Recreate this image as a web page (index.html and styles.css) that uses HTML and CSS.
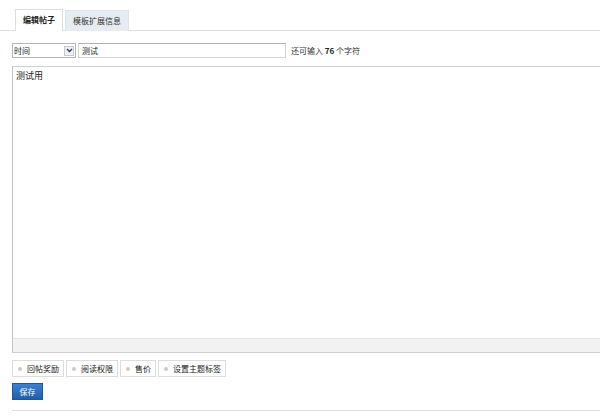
FILE: index.html
```html
<!DOCTYPE html>
<html>
<head>
  <meta charset="utf-8">
  <title>编辑帖子</title>
  <link rel="stylesheet" href="styles.css">
</head>
<body>
  <div class="tabs">
    <div class="tab active">编辑帖子</div>
    <div class="tab">模板扩展信息</div>
  </div>
  <div class="wrap">
    <div class="subject">
      <div class="select">
        <span>时间</span>
        <span class="arrow">
          <svg width="7" height="5" viewBox="0 0 7 5"><path d="M1 1l2.5 2.5L6 1" fill="none" stroke="#2b3f66" stroke-width="1.4"/></svg>
        </span>
      </div>
      <div class="input">测试</div>
      <div class="hint">还可输入 <b>76</b> 个字符</div>
    </div>
    <div class="editor">
      <div class="content">测试用</div>
      <div class="statusbar"></div>
    </div>
    <div class="extras">
      <div class="extra"><i></i>回帖奖励</div>
      <div class="extra"><i></i>阅读权限</div>
      <div class="extra"><i></i>售价</div>
      <div class="extra"><i></i>设置主题标签</div>
    </div>
    <div class="actions">
      <div class="btn-save">保存</div>
    </div>
  </div>
</body>
</html>
```

FILE: styles.css
```css
html,
body {
  margin: 0;
  padding: 0;
  background: #fff;
  overflow: hidden;
}
body {
  font-family: "Noto Sans CJK SC", "Liberation Sans", sans-serif;
  font-size: 8px;
  color: #222;
  line-height: 1;
}

.tabs {
  display: flex;
  gap: 2px;
  padding: 10px 0 0 15px;
  border-bottom: 1px solid #ddd;
}
.tab {
  height: 20px;
  line-height: 20px;
  padding: 0 7px;
  background: #e6ecf1;
  border: 1px solid #dbe2e8;
  border-bottom: 0;
  margin-bottom: -1px;
  color: #333;
}
.tab.active {
  background: #fff;
  font-weight: bold;
  color: #222;
  border-color: #ddd;
  height: 21px;
  margin-top: -1px;
}

.wrap {
  padding: 12px 0 0 12px;
}
.subject {
  display: flex;
  align-items: center;
  gap: 2px;
  height: 15px;
}
.select {
  width: 61px;
  height: 13px;
  border: 1px solid #b5b5b5;
  display: flex;
  align-items: center;
  justify-content: space-between;
  padding-left: 1px;
}
.select .arrow {
  width: 10px;
  height: 10px;
  margin-right: 1px;
  background: #eef0f3;
  border: 1px solid #c4c8cf;
  display: flex;
  align-items: center;
  justify-content: center;
  box-sizing: border-box;
}
.input {
  width: 203px;
  height: 13px;
  border: 1px solid #d4d4d4;
  border-top-color: #b0b0b0;
  padding-left: 3px;
  line-height: 13px;
}
.hint {
  margin-left: 3px;
  color: #333;
}
.hint b {
  color: #222;
}

.editor {
  margin-top: 8px;
  height: 285px;
  border: 1px solid #d0d0d0;
  border-right: 0;
  border-left-color: #c4c4c4;
  display: flex;
  flex-direction: column;
}
.editor .content {
  flex: 1;
  padding: 4px 3px;
  font-size: 9px;
}
.editor .statusbar {
  height: 13px;
  background: #f2f2f2;
  border-top: 1px solid #e4e4e4;
}

.extras {
  display: flex;
  gap: 2px;
  margin-top: 7px;
}
.extra {
  height: 15px;
  line-height: 15px;
  border: 1px solid #ddd;
  padding: 0 4px 0 5px;
  display: flex;
  align-items: center;
  gap: 5px;
}
.extra i {
  width: 4px;
  height: 4px;
  border-radius: 50%;
  background: #ccc;
}

.actions {
  padding: 6px 0 10px;
  border-bottom: 1px solid #ddd;
}
.btn-save {
  display: inline-block;
  width: 31px;
  height: 17px;
  line-height: 16px;
  text-align: center;
  color: #fff;
  background: linear-gradient(#3d7fcf, #1f5fae);
  border: 1px solid #1c55a0;
  box-sizing: border-box;
}
```
